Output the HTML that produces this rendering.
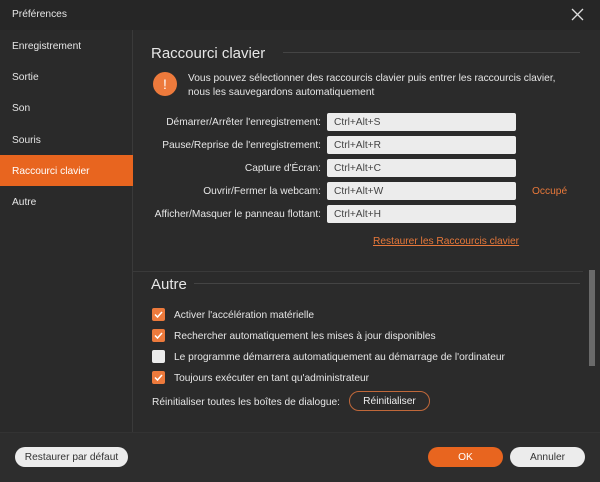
<!DOCTYPE html>
<html><head><meta charset="utf-8"><style>
*{margin:0;padding:0;box-sizing:border-box}
body{width:600px;height:482px;background:#2b2b2b;font-family:"Liberation Sans",sans-serif;font-size:10.2px;color:#e6e6e6;position:relative;overflow:hidden}
.a{position:absolute}
.title{left:0;top:0;width:600px;height:30px;background:#262626}
.side{left:0;top:30px;width:133px;height:402px;background:#2a2a2a;border-right:1px solid #3a3a3a}
.si{position:absolute;left:0;width:133px;height:31px;line-height:33px;padding-left:12px}
.lbl{position:absolute;right:279px;text-align:right;white-space:nowrap;line-height:20px}
.inp{position:absolute;left:327px;width:189px;height:18px;background:#ececec;border-radius:2px;color:#444;padding-left:7px;line-height:20px;overflow:hidden}
.cb{position:absolute;left:152px;width:13px;height:13px;border-radius:2px;background:#ed7a3c}
.cb svg{position:absolute;left:1px;top:1px}
.ct{position:absolute;left:174px;white-space:nowrap;line-height:15px}
.btn{position:absolute;height:20px;border-radius:10px;text-align:center;line-height:22px;overflow:hidden}
</style></head><body>
<div class="a title"></div>
<div class="a" style="left:12px;top:9px">Préférences</div>
<svg class="a" style="left:571px;top:8px" width="13" height="13"><path d="M1 1L12 12M12 1L1 12" stroke="#ddd" stroke-width="1.3"/></svg>
<div class="a side"></div>
<div class="si" style="top:30px">Enregistrement</div>
<div class="si" style="top:61px">Sortie</div>
<div class="si" style="top:92px">Son</div>
<div class="si" style="top:124px">Souris</div>
<div class="si" style="top:155px;background:#e8651f;color:#fff">Raccourci clavier</div>
<div class="si" style="top:186px">Autre</div>

<div class="a" style="left:151px;top:45px;font-size:15px">Raccourci clavier</div>
<div class="a" style="left:283px;top:52px;width:297px;height:1px;background:#444"></div>
<div class="a" style="left:153px;top:72px;width:24px;height:24px;border-radius:12px;background:#ed7a3c;color:#fff;text-align:center;line-height:24px;font-size:14px">!</div>
<div class="a" style="left:188px;top:72px;line-height:14px">Vous pouvez sélectionner des raccourcis clavier puis entrer les raccourcis clavier,<br>nous les sauvegardons automatiquement</div>

<div class="lbl" style="top:113px">Démarrer/Arrêter l'enregistrement:</div>
<div class="lbl" style="top:136px">Pause/Reprise de l'enregistrement:</div>
<div class="lbl" style="top:159px">Capture d'Écran:</div>
<div class="lbl" style="top:182px">Ouvrir/Fermer la webcam:</div>
<div class="lbl" style="top:205px">Afficher/Masquer le panneau flottant:</div>
<div class="inp" style="top:113px">Ctrl+Alt+S</div>
<div class="inp" style="top:136px">Ctrl+Alt+R</div>
<div class="inp" style="top:159px">Ctrl+Alt+C</div>
<div class="inp" style="top:182px">Ctrl+Alt+W</div>
<div class="inp" style="top:205px">Ctrl+Alt+H</div>
<div class="a" style="left:532px;top:186px;color:#e8783a">Occupé</div>
<div class="a" style="left:373px;top:236px;color:#e8783a;text-decoration:underline">Restaurer les Raccourcis clavier</div>

<div class="a" style="left:133px;top:271px;width:450px;height:1px;background:#3a3a3a"></div>
<div class="a" style="left:589px;top:270px;width:6px;height:96px;background:#6a6a6a"></div>
<div class="a" style="left:151px;top:276px;font-size:15px">Autre</div>
<div class="a" style="left:194px;top:283px;width:386px;height:1px;background:#444"></div>

<div class="cb" style="top:308px"><svg width="11" height="11"><path d="M2 5.5L4.5 8L9 3" stroke="#fff" stroke-width="1.5" fill="none"/></svg></div>
<div class="ct" style="top:308px">Activer l'accélération matérielle</div>
<div class="cb" style="top:329px"><svg width="11" height="11"><path d="M2 5.5L4.5 8L9 3" stroke="#fff" stroke-width="1.5" fill="none"/></svg></div>
<div class="ct" style="top:329px">Rechercher automatiquement les mises à jour disponibles</div>
<div class="cb" style="top:350px;background:#ececec"></div>
<div class="ct" style="top:350px">Le programme démarrera automatiquement au démarrage de l'ordinateur</div>
<div class="cb" style="top:371px"><svg width="11" height="11"><path d="M2 5.5L4.5 8L9 3" stroke="#fff" stroke-width="1.5" fill="none"/></svg></div>
<div class="ct" style="top:371px">Toujours exécuter en tant qu'administrateur</div>
<div class="a" style="left:152px;top:397px">Réinitialiser toutes les boîtes de dialogue:</div>
<div class="btn" style="left:349px;top:391px;width:81px;height:20px;border:1px solid #c0683a;color:#eee;line-height:20px">Réinitialiser</div>

<div class="a" style="left:0;top:432px;width:600px;height:50px;background:#2d2d2d;border-top:1px solid #333"></div>
<div class="btn" style="left:15px;top:447px;width:113px;background:#ececec;color:#333">Restaurer par défaut</div>
<div class="btn" style="left:428px;top:447px;width:75px;background:#e8651f;color:#fff">OK</div>
<div class="btn" style="left:510px;top:447px;width:75px;background:#ececec;color:#333">Annuler</div>
</body></html>
